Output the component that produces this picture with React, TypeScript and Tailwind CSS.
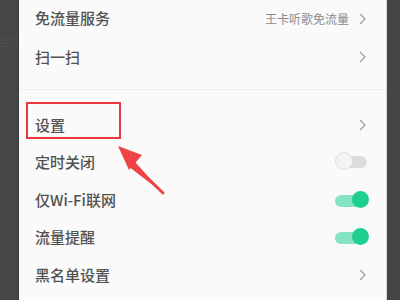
import React from "react";

const Chevron = () => (
  <svg width="8" height="12" viewBox="0 0 8 12" className="shrink-0">
    <path d="M1.5 1.5 L6 6 L1.5 10.5" fill="none" stroke="#a0a0a0" strokeWidth="1.4" strokeLinecap="round" strokeLinejoin="round" />
  </svg>
);

const ToggleOn = () => (
  <div className="relative w-[32px] h-[16px] shrink-0">
    <div className="absolute left-0 top-[3px] w-[30px] h-[12px] rounded-full bg-[#86e3c2]" />
    <div className="absolute right-[-2px] top-[-1px] w-[17px] h-[17px] rounded-full bg-[#1fcf8f]" />
  </div>
);

const ToggleOff = () => (
  <div className="relative w-[32px] h-[16px] shrink-0">
    <div className="absolute left-[2px] top-[2px] w-[30px] h-[12px] rounded-full bg-[#dcdcdc]" />
    <div className="absolute left-[0px] top-[-2px] w-[18px] h-[18px] rounded-full bg-[#f4f4f4] border border-[#dedede]" />
  </div>
);

const Row = ({ label, right, h = "h-[37.5px]" }: { label: string; right: React.ReactNode; h?: string }) => (
  <div className={`flex items-center justify-between pl-[16px] pr-[19px] ${h}`}>
    <span className="text-[15px] font-medium text-[#525252]">{label}</span>
    {right}
  </div>
);

export default function App() {
  return (
    <div
      className="relative w-[400px] h-[300px] overflow-hidden flex bg-[#444444]"
      style={{ fontFamily: '"Noto Sans CJK SC", "Noto Sans", sans-serif' }}
    >
      <div className="w-[19px] h-full bg-[#464646] border-r border-[#3a3a3a] relative overflow-hidden">
        <span className="absolute left-[-4px] top-[33px] text-[12px] text-[#4e4e4e] whitespace-nowrap">会员</span>
      </div>
      <div className="w-[368px] h-full bg-[#fafafa] flex flex-col border-r border-[#d8d8d8]">
        <div className="flex items-center justify-between pl-[16px] pr-[19px] h-[37px]">
          <span className="text-[15px] font-medium text-[#525252]">免流量服务</span>
          <div className="flex items-center gap-[10px]">
            <span className="text-[12px] text-[#8a8a8a]">王卡听歌免流量</span>
            <Chevron />
          </div>
        </div>
        <Row label="扫一扫" right={<Chevron />} h="h-[40px]" />
        <div className="h-[29px] flex flex-col">
          <div className="h-[12px]" />
          <div className="h-px bg-[#ececec]" />
        </div>
        <Row label="设置" right={<Chevron />} />
        <Row label="定时关闭" right={<ToggleOff />} />
        <Row label="仅Wi-Fi联网" right={<ToggleOn />} />
        <Row label="流量提醒" right={<ToggleOn />} />
        <Row label="黑名单设置" right={<Chevron />} />
      </div>
      <div className="flex-1 h-full bg-[#454545]" />

      <div className="absolute left-[26px] top-[102px] w-[95px] h-[37px] border-2 border-[#e8383b]" />
      <svg className="absolute left-0 top-0" width="400" height="300" viewBox="0 0 400 300">
        <path d="M163 193 L135 162 L128 166 Z" fill="#f04343" />
        <path d="M163 193 L131 162" stroke="#f04343" strokeWidth="3" strokeLinecap="round" />
        <polygon points="118,146 142,155 129,170" fill="#f04343" />
      </svg>
    </div>
  );
}
